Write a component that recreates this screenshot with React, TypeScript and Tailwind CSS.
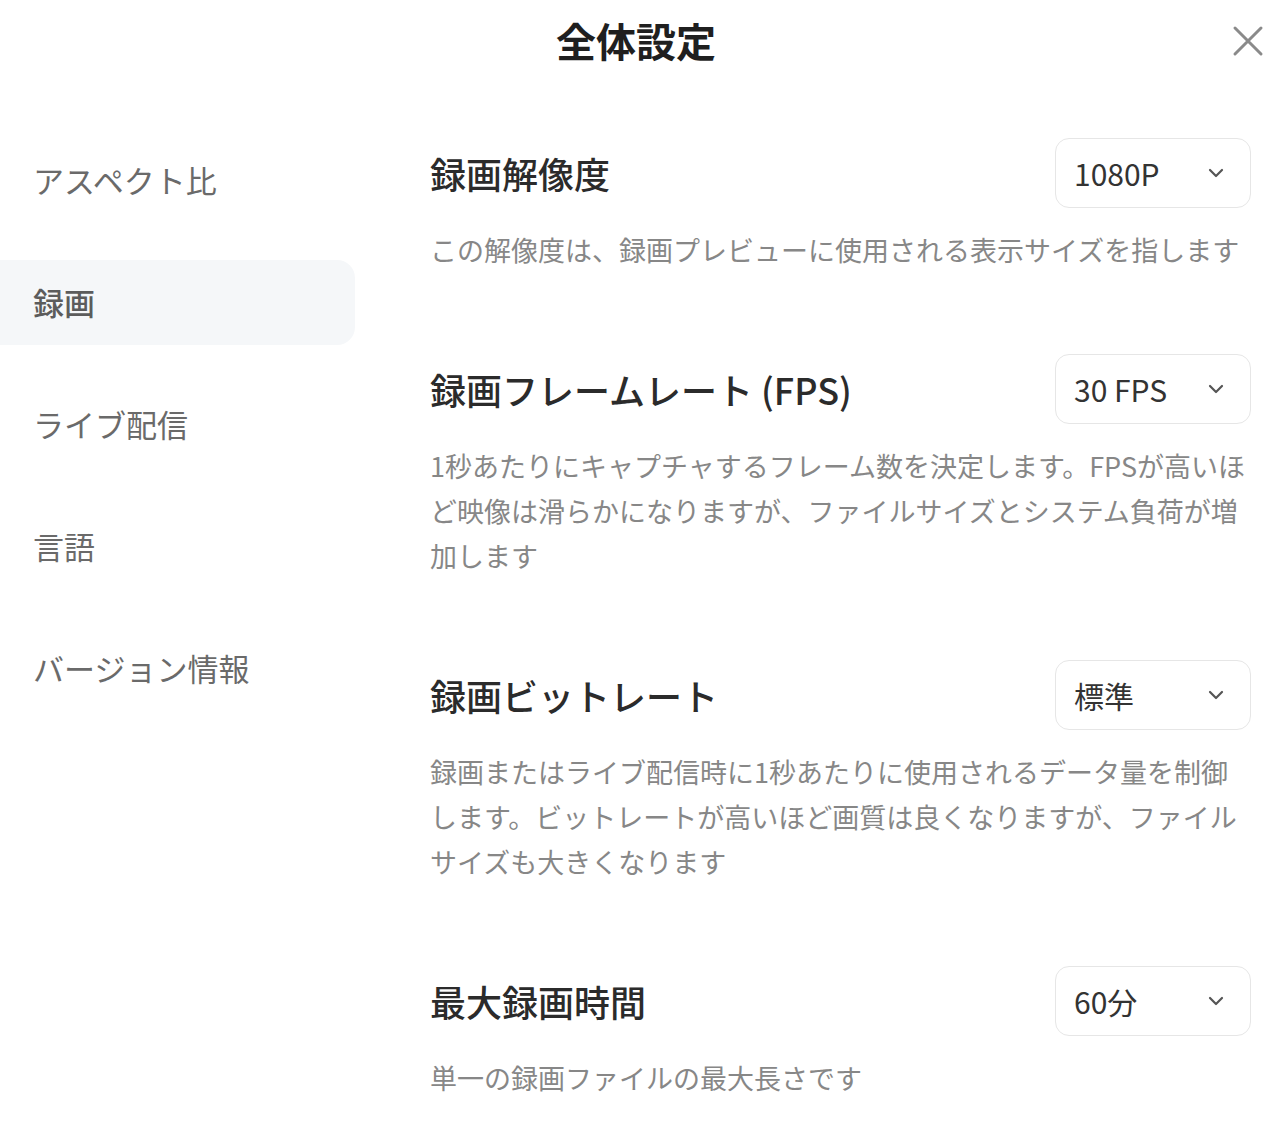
import React, { useState } from "react";

const navItems = ["アスペクト比", "録画", "ライブ配信", "言語", "バージョン情報"];

const settings = [
  {
    title: "録画解像度",
    value: "1080P",
    desc: "この解像度は、録画プレビューに使用される表示サイズを指します",
  },
  {
    title: "録画フレームレート (FPS)",
    value: "30 FPS",
    desc: "1秒あたりにキャプチャするフレーム数を決定します。FPSが高いほど映像は滑らかになりますが、ファイルサイズとシステム負荷が増加します",
  },
  {
    title: "録画ビットレート",
    value: "標準",
    desc: "録画またはライブ配信時に1秒あたりに使用されるデータ量を制御します。ビットレートが高いほど画質は良くなりますが、ファイルサイズも大きくなります",
  },
  {
    title: "最大録画時間",
    value: "60分",
    desc: "単一の録画ファイルの最大長さです",
  },
];

function Chevron() {
  return (
    <svg width="16" height="10" viewBox="0 0 16 10" fill="none">
      <path
        d="M2 2l6 6 6-6"
        stroke="#555"
        strokeWidth="2.2"
        strokeLinecap="round"
        strokeLinejoin="round"
      />
    </svg>
  );
}

export default function App() {
  const [active, setActive] = useState(1);

  return (
    <div className="w-[1280px] h-[1136px] overflow-hidden bg-white font-['Noto_Sans_CJK_JP','Noto_Sans',sans-serif]">
      <header className="relative h-[80px] flex items-center justify-center pr-[8px]">
        <h1 className="text-[40px] font-bold text-[#1f1f1f] leading-none">全体設定</h1>
        <button className="absolute right-[14px] top-[23px] w-[36px] h-[36px] flex items-center justify-center">
          <svg width="32" height="32" viewBox="0 0 32 32" fill="none">
            <path
              d="M3 3l26 26M29 3L3 29"
              stroke="#8a8a8a"
              strokeWidth="3"
              strokeLinecap="round"
            />
          </svg>
        </button>
      </header>

      <div className="flex pt-[58px]">
        <nav className="w-[355px] flex flex-col gap-[37px] shrink-0">
          {navItems.map((item, i) => (
            <button
              key={item}
              onClick={() => setActive(i)}
              className={
                i === active
                  ? "h-[85px] flex items-center pl-[33px] rounded-r-[18px] bg-[#f5f7f9] text-[31px] font-medium text-[#5c5c5c] text-left"
                  : "h-[85px] flex items-center pl-[33px] rounded-r-[18px] text-[31px] text-[#6a6a6a] text-left"
              }
            >
              {item}
            </button>
          ))}
        </nav>

        <main className="ml-[75px] w-[821px] flex flex-col gap-[82px]">
          {settings.map((s) => (
            <section key={s.title}>
              <div className="h-[70px] flex items-center justify-between">
                <h2 className="text-[36px] font-medium text-[#2b2b2b] leading-none">{s.title}</h2>
                <button className="w-[196px] h-[70px] rounded-[14px] border border-[#e6e6e6] flex items-center justify-between pl-[18px] pr-[26px]">
                  <span className="text-[30px] text-[#333] leading-none">{s.value}</span>
                  <Chevron />
                </button>
              </div>
              <p className="mt-[19px] text-[27px] leading-[45px] text-[#878787]">{s.desc}</p>
            </section>
          ))}
        </main>
      </div>
    </div>
  );
}
